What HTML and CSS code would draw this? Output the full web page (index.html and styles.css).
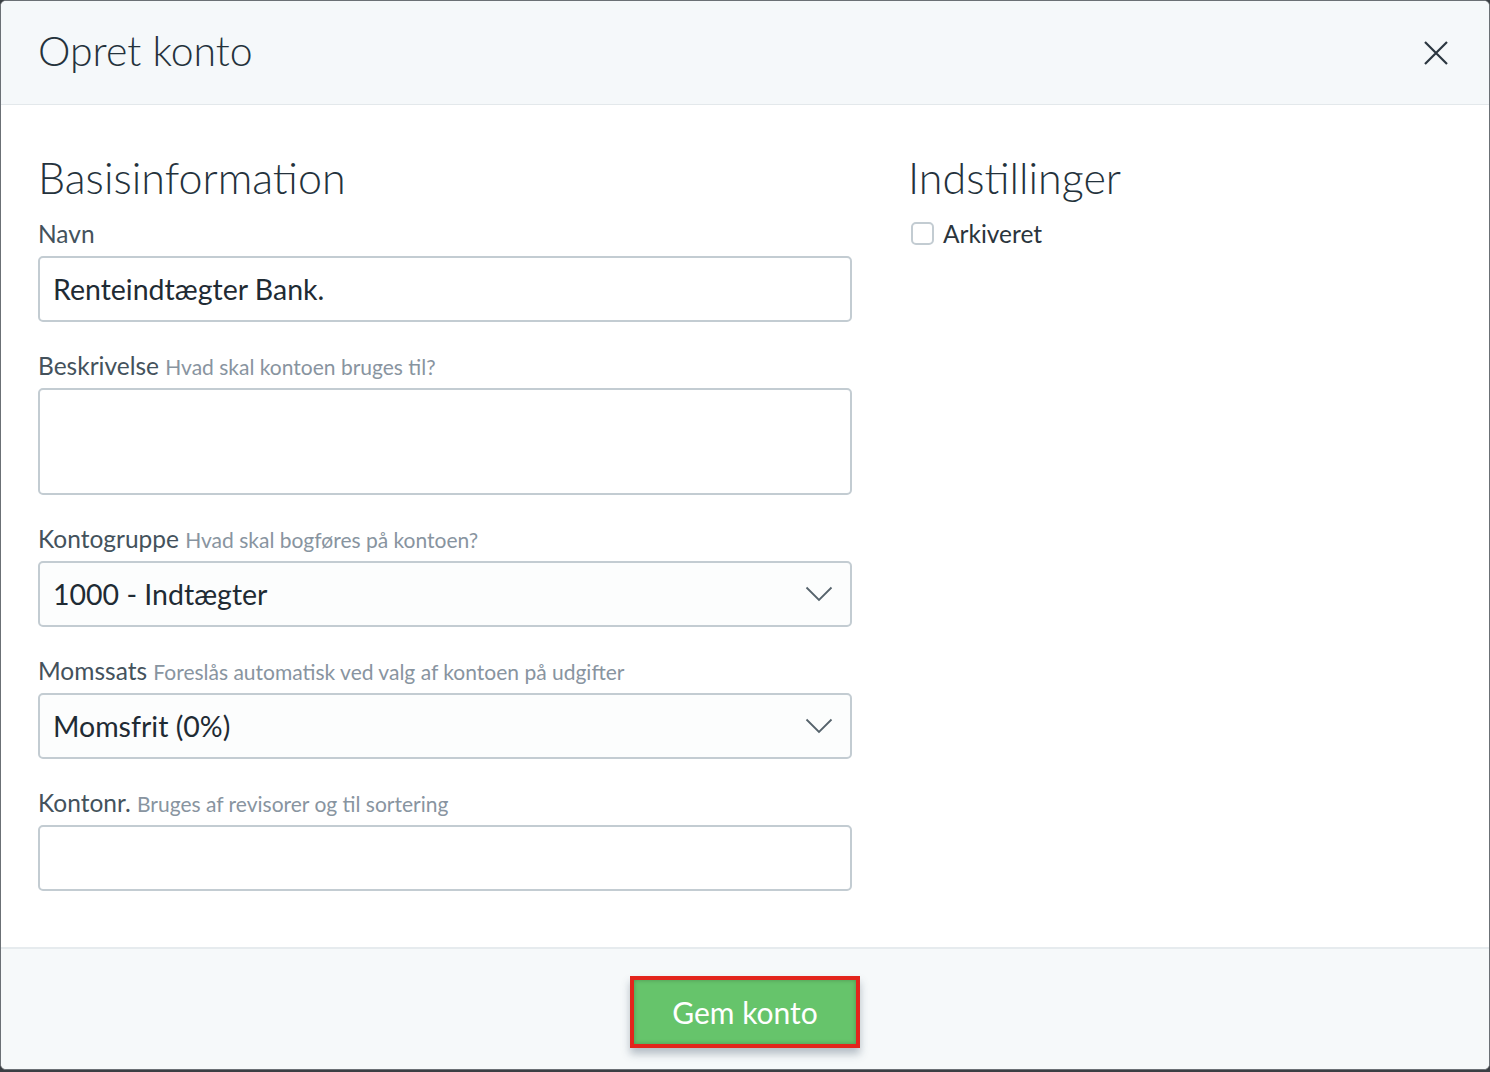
FILE: index.html
```html
<!DOCTYPE html>
<html lang="da">
<head>
<meta charset="utf-8">
<title>Opret konto</title>
<link rel="stylesheet" href="styles.css">
</head>
<body>
<div class="modal">
  <header class="modal-header">
    <h1 class="modal-title">Opret konto</h1>
    <button class="close" aria-label="Luk">
      <svg width="26" height="26" viewBox="0 0 26 26"><path d="M2 2 L24 24 M24 2 L2 24" stroke="#2b3640" stroke-width="2.2" fill="none"/></svg>
    </button>
  </header>
  <main class="modal-body">
    <section class="col-main">
      <h2 class="section-title">Basisinformation</h2>
      <div class="field">
        <label class="label">Navn</label>
        <div class="input">Renteindtægter Bank.</div>
      </div>
      <div class="field">
        <label class="label">Beskrivelse <span class="hint">Hvad skal kontoen bruges til?</span></label>
        <div class="input textarea"></div>
      </div>
      <div class="field">
        <label class="label">Kontogruppe <span class="hint">Hvad skal bogføres på kontoen?</span></label>
        <div class="input select">1000 - Indtægter
          <svg class="chev" width="28" height="16" viewBox="0 0 28 16"><path d="M1.5 1.5 L14 14 L26.5 1.5" stroke="#56636c" stroke-width="1.8" fill="none"/></svg>
        </div>
      </div>
      <div class="field">
        <label class="label">Momssats <span class="hint">Foreslås automatisk ved valg af kontoen på udgifter</span></label>
        <div class="input select">Momsfrit (0%)
          <svg class="chev" width="28" height="16" viewBox="0 0 28 16"><path d="M1.5 1.5 L14 14 L26.5 1.5" stroke="#56636c" stroke-width="1.8" fill="none"/></svg>
        </div>
      </div>
      <div class="field">
        <label class="label">Kontonr. <span class="hint">Bruges af revisorer og til sortering</span></label>
        <div class="input"></div>
      </div>
    </section>
    <section class="col-side">
      <h2 class="section-title">Indstillinger</h2>
      <label class="check"><span class="box"></span>Arkiveret</label>
    </section>
  </main>
  <footer class="modal-footer">
    <div class="highlight"><button class="btn">Gem konto</button></div>
  </footer>
</div>
</body>
</html>
```
FILE: styles.css
```css
html, body {
  margin: 0;
  padding: 0;
  background: #3a3f44;
  font-family: "Lato", "Open Sans", "Liberation Sans", sans-serif;
}
.modal {
  box-sizing: border-box;
  width: 1490px;
  height: 1070px;
  background: #fff;
  border: 1px solid #6b7075;
  border-radius: 6px;
  overflow: hidden;
  display: flex;
  flex-direction: column;
}
.modal-header {
  height: 104px;
  flex: none;
  background: #f5f8fa;
  border-bottom: 1px solid #e3e8eb;
  display: flex;
  align-items: center;
  justify-content: space-between;
  padding: 0 40px 0 37px;
  box-sizing: border-box;
}
.modal-title {
  margin: 0 0 4px;
  font-size: 41px;
  font-weight: 300;
  color: #24323c;
}
.close {
  background: none;
  border: 0;
  padding: 0;
  width: 26px;
  height: 26px;
}
.modal-body {
  flex: 1;
  display: grid;
  grid-template-columns: 814px 1fr;
  column-gap: 56px;
  padding: 45px 37px 0;
}
.section-title {
  margin: 0 0 13px;
  font-size: 43px;
  font-weight: 300;
  line-height: 56px;
  color: #24323c;
}
.field {
  margin-bottom: 29px;
}
.label {
  display: block;
  font-size: 24.5px;
  line-height: 30px;
  height: 30px;
  color: #44525c;
  margin-bottom: 7px;
}
.hint {
  font-size: 21px;
  line-height: 1;
  color: #8894a0;
}
.input {
  box-sizing: border-box;
  height: 66px;
  border: 2px solid #c3ccd2;
  border-radius: 5px;
  padding: 0 13px;
  display: flex;
  align-items: center;
  font-size: 28.5px;
  color: #1f2b34;
  background: #fff;
}
.textarea {
  height: 107px;
}
.select {
  justify-content: space-between;
  background: #fcfdfd;
}
.chev {
  margin-right: 4px;
}
.check {
  display: flex;
  align-items: center;
  gap: 9px;
  font-size: 24.5px;
  color: #2a353d;
  margin-left: 3px;
  margin-top: 2px;
}
.box {
  box-sizing: border-box;
  width: 23px;
  height: 23px;
  border: 2px solid #c3ccd2;
  border-radius: 5px;
  background: #fff;
}
.modal-footer {
  height: 122px;
  flex: none;
  background: #f6f9fa;
  border-top: 2px solid #e6ebee;
  display: flex;
  justify-content: center;
  align-items: flex-start;
  box-sizing: border-box;
  padding-top: 27px;
}
.highlight {
  border: 4px solid #e3251c;
  box-shadow: 0 6px 8px rgba(60, 80, 100, 0.35);
}
.btn {
  display: block;
  width: 222px;
  height: 64px;
  border: 0;
  background: #66c46b;
  color: #fff;
  font-family: inherit;
  font-size: 30px;
  padding: 0;
  box-shadow: inset 0 0 4px rgba(0,0,0,0.25);
}
```
